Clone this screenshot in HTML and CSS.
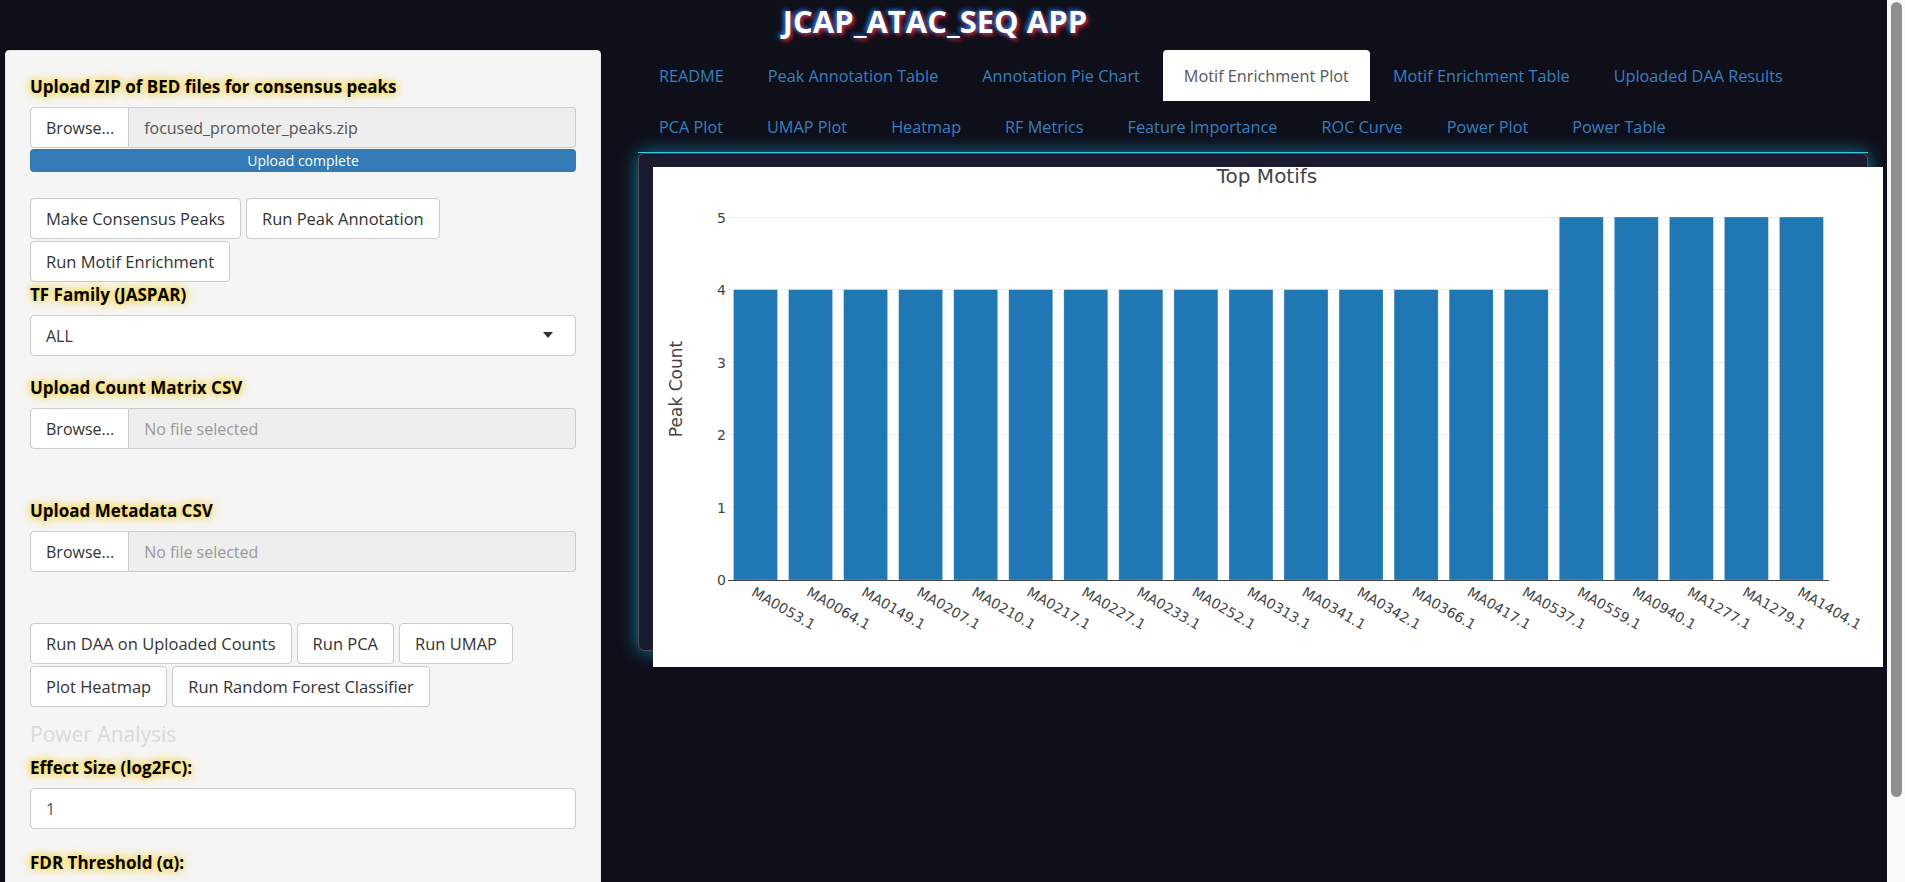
FILE: index.html
```html
<!DOCTYPE html>
<html lang="en">
<head>
<meta charset="utf-8">
<title>JCAP_ATAC_SEQ APP</title>
<link rel="stylesheet" href="styles.css">
</head>
<body>
<div class="app">
  <h1 class="app-title">JCAP_ATAC_SEQ APP</h1>
  <div class="layout">
    <aside class="sidebar">
      <div class="form-group">
        <label class="ctl-label">Upload ZIP of BED files for consensus peaks</label>
        <div class="file-input">
          <span class="browse">Browse...</span>
          <span class="fname">focused_promoter_peaks.zip</span>
        </div>
        <div class="progress">Upload complete</div>
      </div>
      <div class="btn-row">
        <span class="btn">Make Consensus Peaks</span>
        <span class="btn">Run Peak Annotation</span>
        <span class="btn">Run Motif Enrichment</span>
      </div>
      <div class="form-group select-group">
        <label class="ctl-label">TF Family (JASPAR)</label>
        <div class="select">
          <span>ALL</span>
          <span class="caret"></span>
        </div>
      </div>
      <div class="form-group">
        <label class="ctl-label">Upload Count Matrix CSV</label>
        <div class="file-input">
          <span class="browse">Browse...</span>
          <span class="fname placeholder">No file selected</span>
        </div>
        <div class="progress hidden"></div>
      </div>
      <div class="form-group">
        <label class="ctl-label">Upload Metadata CSV</label>
        <div class="file-input">
          <span class="browse">Browse...</span>
          <span class="fname placeholder">No file selected</span>
        </div>
        <div class="progress hidden"></div>
      </div>
      <div class="btn-row">
        <span class="btn">Run DAA on Uploaded Counts</span>
        <span class="btn">Run PCA</span>
        <span class="btn">Run UMAP</span>
        <span class="btn">Plot Heatmap</span>
        <span class="btn">Run Random Forest Classifier</span>
      </div>
      <h4 class="section-title">Power Analysis</h4>
      <div class="form-group num-group">
        <label class="ctl-label">Effect Size (log2FC):</label>
        <div class="text-input">1</div>
      </div>
      <div class="form-group num-group">
        <label class="ctl-label">FDR Threshold (α):</label>
        <div class="text-input">0.05</div>
      </div>
    </aside>

    <main class="main">
      <ul class="tabs">
        <li class="tab">README</li>
        <li class="tab">Peak Annotation Table</li>
        <li class="tab">Annotation Pie Chart</li>
        <li class="tab active">Motif Enrichment Plot</li>
        <li class="tab">Motif Enrichment Table</li>
        <li class="tab">Uploaded DAA Results</li>
        <li class="tab">PCA Plot</li>
        <li class="tab">UMAP Plot</li>
        <li class="tab">Heatmap</li>
        <li class="tab">RF Metrics</li>
        <li class="tab">Feature Importance</li>
        <li class="tab">ROC Curve</li>
        <li class="tab">Power Plot</li>
        <li class="tab">Power Table</li>
      </ul>
      <div class="tab-content">
        <div class="plot">
          <svg class="plot-svg" width="1230" height="500" viewBox="0 0 1230 500" xmlns="http://www.w3.org/2000/svg">
            <rect x="0" y="0" width="1230" height="500" fill="#fff"/>
            <g stroke="#eeeeee" stroke-width="1">
              <line x1="75" y1="340.5" x2="1176" y2="340.5"/>
              <line x1="75" y1="267.5" x2="1176" y2="267.5"/>
              <line x1="75" y1="195.5" x2="1176" y2="195.5"/>
              <line x1="75" y1="122.5" x2="1176" y2="122.5"/>
              <line x1="75" y1="50.5" x2="1176" y2="50.5"/>
            </g>
            <g fill="#1f77b4" stroke="#ffffff" stroke-opacity="0.45" stroke-width="0.6">
              <rect x="80.5" y="122.6" width="44" height="290.4"/>
              <rect x="135.55" y="122.6" width="44" height="290.4"/>
              <rect x="190.6" y="122.6" width="44" height="290.4"/>
              <rect x="245.65" y="122.6" width="44" height="290.4"/>
              <rect x="300.7" y="122.6" width="44" height="290.4"/>
              <rect x="355.75" y="122.6" width="44" height="290.4"/>
              <rect x="410.8" y="122.6" width="44" height="290.4"/>
              <rect x="465.85" y="122.6" width="44" height="290.4"/>
              <rect x="520.9" y="122.6" width="44" height="290.4"/>
              <rect x="575.95" y="122.6" width="44" height="290.4"/>
              <rect x="631" y="122.6" width="44" height="290.4"/>
              <rect x="686.05" y="122.6" width="44" height="290.4"/>
              <rect x="741.1" y="122.6" width="44" height="290.4"/>
              <rect x="796.15" y="122.6" width="44" height="290.4"/>
              <rect x="851.2" y="122.6" width="44" height="290.4"/>
              <rect x="906.25" y="50" width="44" height="363"/>
              <rect x="961.3" y="50" width="44" height="363"/>
              <rect x="1016.35" y="50" width="44" height="363"/>
              <rect x="1071.4" y="50" width="44" height="363"/>
              <rect x="1126.45" y="50" width="44" height="363"/>
            </g>
            <line x1="75" y1="413.5" x2="1176" y2="413.5" stroke="#444" stroke-width="1"/>
            <g class="ytick" text-anchor="end">
              <text x="73" y="418">0</text>
              <text x="73" y="345.5">1</text>
              <text x="73" y="273">2</text>
              <text x="73" y="200.5">3</text>
              <text x="73" y="128">4</text>
              <text x="73" y="55.5">5</text>
            </g>
            <g class="xtick">
              <text transform="translate(97.5 428) rotate(30)">MA0053.1</text>
              <text transform="translate(152.55 428) rotate(30)">MA0064.1</text>
              <text transform="translate(207.6 428) rotate(30)">MA0149.1</text>
              <text transform="translate(262.65 428) rotate(30)">MA0207.1</text>
              <text transform="translate(317.7 428) rotate(30)">MA0210.1</text>
              <text transform="translate(372.75 428) rotate(30)">MA0217.1</text>
              <text transform="translate(427.8 428) rotate(30)">MA0227.1</text>
              <text transform="translate(482.85 428) rotate(30)">MA0233.1</text>
              <text transform="translate(537.9 428) rotate(30)">MA0252.1</text>
              <text transform="translate(592.95 428) rotate(30)">MA0313.1</text>
              <text transform="translate(648 428) rotate(30)">MA0341.1</text>
              <text transform="translate(703.05 428) rotate(30)">MA0342.1</text>
              <text transform="translate(758.1 428) rotate(30)">MA0366.1</text>
              <text transform="translate(813.15 428) rotate(30)">MA0417.1</text>
              <text transform="translate(868.2 428) rotate(30)">MA0537.1</text>
              <text transform="translate(923.25 428) rotate(30)">MA0559.1</text>
              <text transform="translate(978.3 428) rotate(30)">MA0940.1</text>
              <text transform="translate(1033.35 428) rotate(30)">MA1277.1</text>
              <text transform="translate(1088.4 428) rotate(30)">MA1279.1</text>
              <text transform="translate(1143.45 428) rotate(30)">MA1404.1</text>
            </g>
            <text class="axis-title" transform="translate(29 222) rotate(-90)" text-anchor="middle">Peak Count</text>
            <text class="plot-title" x="614" y="16" text-anchor="middle">Top Motifs</text>
          </svg>
        </div>
      </div>
    </main>
  </div>
</div>
<div class="scrollbar" aria-hidden="true"><div class="scroll-thumb"></div></div>
</body>
</html>
```

FILE: styles.css
```css
html {
  background: #0f0f1a;
}

body {
  margin: 0;
  background: #0f0f1a;
  font-family: "Open Sans", "Noto Sans", sans-serif;
  font-size: 16px;
  color: #333;
}

/* window scrollbar (page is taller than the viewport) */
.scrollbar {
  position: fixed;
  top: 0;
  right: 0;
  width: 18px;
  height: 100%;
  box-sizing: border-box;
  padding: 2px 3px 0 4px;
  background: #f9f9f9;
}

.scroll-thumb {
  height: 795px;
  border-radius: 6px;
  background: #8f8f8f;
}

.app {
  padding-bottom: 14px;
}

.app-title {
  margin: 0;
  height: 50px;
  box-sizing: border-box;
  padding-right: 35px;
  text-align: center;
  font-size: 31px;
  line-height: 42px;
  font-weight: 700;
  color: #fff;
  text-shadow: -2px -1px 4px #1e7bff, 2px 2px 4px #e0252b;
}

.layout {
  display: flex;
  align-items: flex-start;
  padding-left: 5px;
}

/* ---------- sidebar ---------- */
.sidebar {
  width: 596px;
  flex: none;
  box-sizing: border-box;
  padding: 25px 24px 35px;
  background: #f5f5f5;
  border: 1px solid #e6e6e6;
  border-radius: 4px;
}

.ctl-label {
  display: block;
  font-weight: 700;
  font-size: 17px;
  line-height: 22px;
  margin-bottom: 9px;
  color: #000;
  text-shadow: 0 0 6px #ffd400, 0 0 12px rgba(255, 200, 0, 0.75);
}

.file-input {
  display: flex;
  height: 41px;
}

.browse {
  display: flex;
  align-items: center;
  padding: 0 14px 0 15px;
  background: #fff;
  border: 1px solid #ccc;
  border-radius: 4px 0 0 4px;
  color: #333;
}

.fname {
  flex: 1;
  display: flex;
  align-items: center;
  padding-left: 15px;
  background: #eee;
  border: 1px solid #ccc;
  border-left: 0;
  border-radius: 0 4px 4px 0;
  color: #555;
}

.fname.placeholder {
  color: #999;
}

.progress {
  margin-top: 1px;
  height: 23px;
  line-height: 23px;
  margin-bottom: 26px;
  background: #337ab7;
  border-radius: 4px;
  color: #fff;
  font-size: 14px;
  text-align: center;
}

.progress.hidden {
  visibility: hidden;
  margin-bottom: 27px;
}

.btn-row {
  display: flex;
  flex-wrap: wrap;
  gap: 2px 5px;
  margin-bottom: 2px;
}

.btn {
  display: flex;
  align-items: center;
  height: 41px;
  box-sizing: border-box;
  padding: 0 15px;
  background: #fff;
  border: 1px solid #ccc;
  border-radius: 4px;
  color: #333;
  font-size: 16.5px;
}

.select-group {
  margin-bottom: 21px;
}

.select {
  display: flex;
  align-items: center;
  justify-content: space-between;
  height: 41px;
  box-sizing: border-box;
  padding: 0 22px 0 15px;
  background: #fff;
  border: 1px solid #ccc;
  border-radius: 4px;
  color: #333;
}

.caret {
  width: 0;
  height: 0;
  border-top: 6px solid #333;
  border-left: 5px solid transparent;
  border-right: 5px solid transparent;
  margin-top: -2px;
}

.section-title {
  margin: 13px 0 9px;
  font-size: 21px;
  line-height: 28px;
  font-weight: 500;
  color: #dadada;
}

.num-group {
  margin-bottom: 23px;
}

.num-group:last-child {
  margin-bottom: 0;
}

.text-input {
  display: flex;
  align-items: center;
  height: 41px;
  box-sizing: border-box;
  padding-left: 15px;
  background: #fff;
  border: 1px solid #ccc;
  border-radius: 4px;
  color: #555;
}

/* ---------- main ---------- */
.main {
  width: 1230px;
  flex: none;
  margin-left: 37px;
}

.tabs {
  display: flex;
  flex-wrap: wrap;
  list-style: none;
  margin: 0;
  padding: 0;
  border-bottom: 1px solid #56cbe2;
}

.tab {
  margin-right: 2px;
  padding: 14px 20px 12px;
  line-height: 23px;
  border: 1px solid transparent;
  border-radius: 4px 4px 0 0;
  color: #3580c0;
  font-size: 16.25px;
}

.tab.active {
  background: #fff;
  color: #555;
}

.tab-content {
  height: 498px;
  box-sizing: border-box;
  padding: 13px 14px 14px;
  background: #1b1b2f;
  border: 1px solid #4d4d5c;
  border-radius: 6px;
  box-shadow: 0 0 18px rgba(10, 180, 220, 0.7);
}

.plot {
  width: 1230px;
  height: 500px;
}

.plot-svg {
  display: block;
  font-family: "DejaVu Sans", Verdana, sans-serif;
}

.ytick text,
.xtick text {
  font-size: 14px;
  fill: #444;
}

.axis-title {
  font-size: 17px;
  fill: #444;
}

.plot-title {
  font-size: 20px;
  fill: #444;
}
```
